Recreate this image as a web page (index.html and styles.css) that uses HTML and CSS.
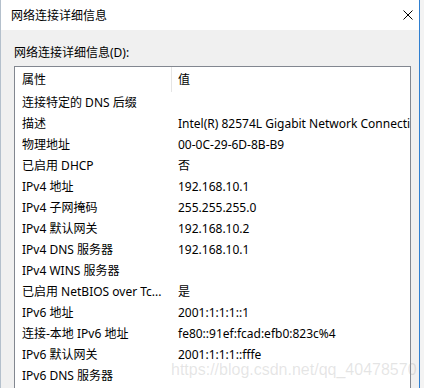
FILE: index.html
```html
<!DOCTYPE html>
<html lang="zh-CN">

<head>
    <meta charset="UTF-8">
    <meta name="viewport" content="width=device-width, initial-scale=1.0">
    <title>网络连接详细信息</title>
    <link rel="stylesheet" href="styles.css">
</head>

<body>
    <div class="screen">
        <div class="dialog">
            <div class="titlebar">
                <span class="title">网络连接详细信息</span>
                <span class="close">
                    <svg width="10" height="10" viewBox="0 0 10 10">
                        <path d="M0.5 0.5 L9.5 9.5 M9.5 0.5 L0.5 9.5" stroke="#000" stroke-width="1" fill="none" />
                    </svg>
                </span>
            </div>

            <div class="content">
                <div class="label">网络连接详细信息(D):</div>

                <div class="listbox">
                    <div class="list-head">
                        <div class="cell-prop">属性</div>
                        <div class="cell-val">值</div>
                    </div>
                    <div class="row"><div class="cell-prop">连接特定的 DNS 后缀</div><div class="cell-val"></div></div>
                    <div class="row"><div class="cell-prop">描述</div><div class="cell-val">Intel(R) 82574L Gigabit Network Connection</div></div>
                    <div class="row"><div class="cell-prop">物理地址</div><div class="cell-val">00-0C-29-6D-8B-B9</div></div>
                    <div class="row"><div class="cell-prop">已启用 DHCP</div><div class="cell-val">否</div></div>
                    <div class="row"><div class="cell-prop">IPv4 地址</div><div class="cell-val">192.168.10.1</div></div>
                    <div class="row"><div class="cell-prop">IPv4 子网掩码</div><div class="cell-val">255.255.255.0</div></div>
                    <div class="row"><div class="cell-prop">IPv4 默认网关</div><div class="cell-val">192.168.10.2</div></div>
                    <div class="row"><div class="cell-prop">IPv4 DNS 服务器</div><div class="cell-val">192.168.10.1</div></div>
                    <div class="row"><div class="cell-prop">IPv4 WINS 服务器</div><div class="cell-val"></div></div>
                    <div class="row"><div class="cell-prop">已启用 NetBIOS over Tc...</div><div class="cell-val">是</div></div>
                    <div class="row"><div class="cell-prop">IPv6 地址</div><div class="cell-val">2001:1:1:1::1</div></div>
                    <div class="row"><div class="cell-prop">连接-本地 IPv6 地址</div><div class="cell-val">fe80::91ef:fcad:efb0:823c%4</div></div>
                    <div class="row"><div class="cell-prop">IPv6 默认网关</div><div class="cell-val">2001:1:1:1::fffe</div></div>
                    <div class="row"><div class="cell-prop">IPv6 DNS 服务器</div><div class="cell-val"></div></div>
                    <div class="row"><div class="cell-prop">&nbsp;</div><div class="cell-val"></div></div>
                </div>
            </div>
        </div>
        <div class="edge"></div>
    </div>

    <div class="watermark">https://blog.csdn.net/qq_40478570</div>
</body>

</html>
```

FILE: styles.css
```css
body {
    margin: 0;
    width: 424px;
    height: 388px;
    overflow: hidden;
    font-family: "Noto Sans", "Noto Sans CJK SC", sans-serif;
    font-size: 12px;
    color: #000;
    background-color: #f3f3f3;
}

.screen {
    display: flex;
    height: 388px;
}

.dialog {
    width: 418px;
    display: flex;
    flex-direction: column;
    border-left: 1px solid #b4c0cc;
    background-color: #f0f0f0;
}

.edge {
    width: 1px;
    background-color: #2f7fd0;
}

.titlebar {
    height: 30px;
    display: flex;
    align-items: center;
    justify-content: space-between;
    padding: 0 6px 0 10px;
    background-color: #fff;
}

.close {
    display: flex;
    width: 10px;
    height: 10px;
}

.content {
    flex: 1;
    padding: 15px 8px 0 13px;
    overflow: hidden;
}

.label {
    line-height: 16px;
    margin-bottom: 5px;
}

.listbox {
    border: 1px solid #828790;
    background-color: #fff;
}

.list-head,
.row {
    display: flex;
    white-space: nowrap;
}

.list-head {
    height: 25px;
    line-height: 25px;
}

.row {
    height: 21px;
    line-height: 21px;
}

.cell-prop {
    width: 157px;
    box-sizing: border-box;
    padding-left: 7px;
    overflow: hidden;
}

.list-head .cell-prop {
    border-right: 1px solid #e5e5e5;
}

.cell-val {
    flex: 1;
    padding-left: 6px;
    overflow: hidden;
}

.watermark {
    position: absolute;
    left: 171px;
    top: 362px;
    font-family: "Liberation Sans", Arial, sans-serif;
    font-size: 16px;
    line-height: 16px;
    color: rgba(150, 150, 150, 0.25);
}
```
